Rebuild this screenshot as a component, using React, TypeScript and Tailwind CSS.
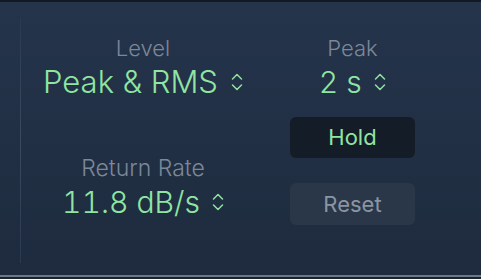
import React from "react";

function Chev({ className }: { className?: string }) {
  return (
    <svg className={className} width="12" height="22" viewBox="0 0 12 22" fill="none">
      <path d="M1.5 8 L6 3.5 L10.5 8" stroke="#8fe3a1" strokeWidth="1.5" strokeLinecap="round" strokeLinejoin="round" />
      <path d="M1.5 14 L6 18.5 L10.5 14" stroke="#8fe3a1" strokeWidth="1.5" strokeLinecap="round" strokeLinejoin="round" />
    </svg>
  );
}

export default function App() {
  return (
    <div
      className="w-[481px] h-[279px] overflow-hidden bg-gradient-to-b from-[#24344b] to-[#1e2b3e] border-t-2 border-[#121922] flex flex-col font-light"
      style={{ fontFamily: "Inter, 'Liberation Sans', sans-serif" }}
    >
      <div className="flex flex-1 pl-[20px]">
        <div className="w-px mt-[16px] mb-[12px] bg-gradient-to-b from-[#2a3a50] via-[#3a4a60] to-[#2a3a50]" />
        <div className="w-[244px] flex flex-col items-center">
          <div className="mt-[33px] text-[22px] leading-[26px] text-[#7b8898]">Level</div>
          <div className="mt-[4px] flex items-center gap-[13px]">
            <span className="text-[31px] leading-[34px] text-[#90e5a2]">Peak &amp; RMS</span>
            <Chev />
          </div>
          <div className="mt-[56px] text-[23px] leading-[26px] text-[#7b8898]">Return Rate</div>
          <div className="mt-[4px] flex items-center gap-[12px]">
            <span className="text-[30px] leading-[34px] text-[#90e5a2] tabular-nums">11.8 dB/s</span>
            <Chev />
          </div>
        </div>
        <div className="ml-[25px] w-[125px] flex flex-col items-center">
          <div className="mt-[33px] text-[22px] leading-[26px] text-[#7b8898]">Peak</div>
          <div className="mt-[4px] flex items-center gap-[12px]">
            <span className="text-[30px] leading-[34px] text-[#90e5a2]">2 s</span>
            <Chev />
          </div>
          <button className="mt-[18px] w-[125px] h-[41px] rounded-[6px] bg-[#141c27] text-[22px] font-normal text-[#90e5a2] flex items-center justify-center">
            Hold
          </button>
          <button className="mt-[25px] w-[125px] h-[42px] rounded-[6px] bg-[#2a3749] text-[22px] font-normal text-[#8a95a4] flex items-center justify-center">
            Reset
          </button>
        </div>
      </div>
      <div className="h-[2px] bg-[#6b7888]" />
      <div className="h-[2px] bg-[#1a222c]" />
    </div>
  );
}
